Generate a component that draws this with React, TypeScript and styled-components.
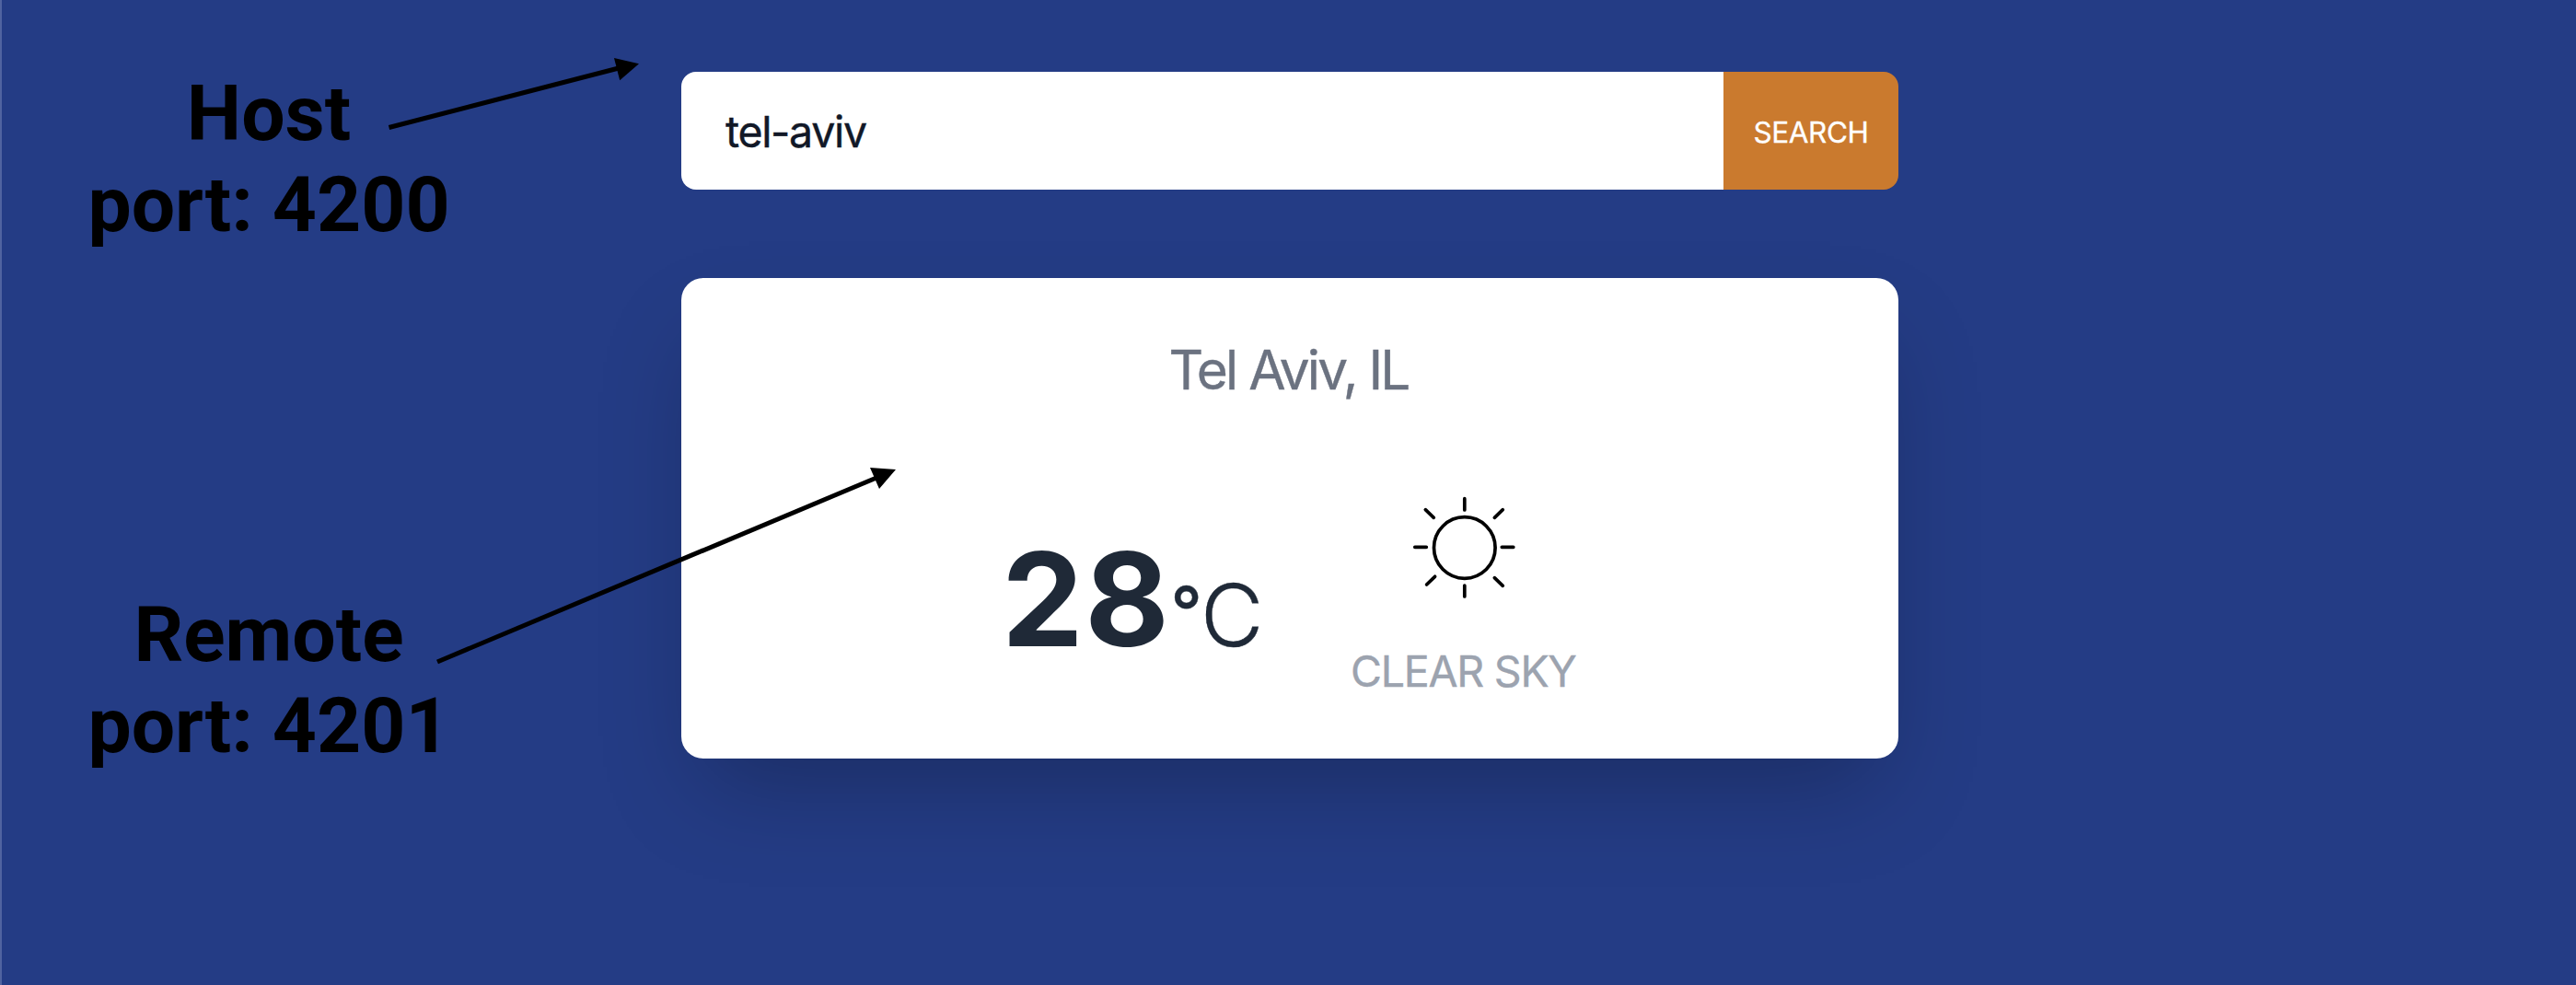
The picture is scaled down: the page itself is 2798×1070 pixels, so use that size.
import React from "react";
import styled, { createGlobalStyle } from "styled-components";

const GlobalStyle = createGlobalStyle`
  *, *::before, *::after { box-sizing: border-box; }
  body { margin: 0; background: #243c85; }
`;

const Page = styled.div`
  position: relative;
  display: grid;
  grid-template-columns: 738px 1322px 1fr;
  width: 100%;
  height: 1070px;
  overflow: hidden;
  background: #243c85;
  border-left: 2px solid #5063a0;
  font-family: Inter, "Liberation Sans", sans-serif;
`;

const Notes = styled.aside`
  display: flex;
  flex-direction: column;
  align-items: flex-start;
  gap: 368px;
  padding: 74px 0 0 93px;
`;

const Note = styled.p`
  margin: 0;
  width: 394px;
  color: #000;
  font-family: Roboto, sans-serif;
  font-size: 84px;
  font-weight: 700;
  line-height: 99px;
  text-align: center;
  white-space: nowrap;
`;

const Main = styled.main`
  display: flex;
  flex-direction: column;
  gap: 96px;
  padding-top: 78px;
`;

const SearchBar = styled.form`
  display: flex;
  height: 128px;
  border-radius: 16px;
  overflow: hidden;
`;

const SearchInput = styled.input`
  flex: 1;
  min-width: 0;
  padding: 2px 48px 0;
  border: 0;
  outline: 0;
  background: #fff;
  color: #111827;
  font: 400 46.5px Inter, "Liberation Sans", sans-serif;
  letter-spacing: -1.35px;
  -webkit-text-stroke: 0.4px currentColor;
`;

const SearchButton = styled.button`
  width: 190px;
  padding: 2px 0 0;
  border: 0;
  background: #ca7a2e;
  color: #fff;
  font: 400 31.5px Inter, "Liberation Sans", sans-serif;
  letter-spacing: -0.45px;
  text-transform: uppercase;
  -webkit-text-stroke: 0.3px currentColor;
`;

const Card = styled.section`
  display: flex;
  flex-direction: column;
  align-items: center;
  height: 522px;
  padding-top: 62px;
  border-radius: 24px;
  background: #fff;
  box-shadow: 0 50px 100px -24px rgba(0, 0, 0, 0.25);
`;

const City = styled.h1`
  margin: 0;
  padding-right: 3px;
  color: #6b7280;
  font-size: 58.5px;
  font-weight: 400;
  line-height: 76px;
  letter-spacing: -2.8px;
  -webkit-text-stroke: 0.4px currentColor;
`;

const Reading = styled.div`
  display: flex;
  width: 626px;
  gap: 96px;
  margin-top: 75px;
`;

const Temperature = styled.div`
  display: flex;
  align-items: baseline;
  width: 283px;
  padding-top: 64px;
  color: #1f2937;
  line-height: 144px;
  white-space: nowrap;
`;

const Degrees = styled.span`
  font-size: 141px;
  font-weight: 700;
  letter-spacing: 1.5px;
`;

const Unit = styled.span`
  font-size: 94px;
  font-weight: 300;
  -webkit-text-stroke: 0.4px currentColor;
`;

const DegreeSign = styled.span`
  display: inline-block;
  width: 32.5px;
  font-size: 75px;
  font-weight: 500;
  line-height: 1;
  vertical-align: 11px;
`;

const Conditions = styled.div`
  display: flex;
  flex-direction: column;
  align-items: flex-start;
`;

const SunIcon = styled.svg`
  display: block;
  width: 160px;
  height: 160px;
  margin: 0 0 18px 43px;
`;

const Summary = styled.span`
  color: #9ca3af;
  font-size: 46.5px;
  font-weight: 400;
  line-height: 72px;
  letter-spacing: -1.25px;
  text-transform: uppercase;
  white-space: nowrap;
  -webkit-text-stroke: 0.4px currentColor;
`;

/* Overlay that links each note to the part of the page it describes. */
const Arrows = styled.svg`
  position: absolute;
  left: -2px;
  top: 0;
  width: 1000px;
  height: 760px;
  pointer-events: none;
`;

export default function App() {
  return (
    <>
      <GlobalStyle />
      <Page>
        <Notes>
          <Note>
            Host
            <br />
            port: 4200
          </Note>
          <Note>
            Remote
            <br />
            port: 4201
          </Note>
        </Notes>
        <Main>
          <SearchBar>
            <SearchInput defaultValue="tel-aviv" />
            <SearchButton type="button">Search</SearchButton>
          </SearchBar>
          <Card>
            <City>Tel Aviv, IL</City>
            <Reading>
              <Temperature>
                <Degrees>28</Degrees>
                <Unit>
                  <DegreeSign>°</DegreeSign>C
                </Unit>
              </Temperature>
              <Conditions>
                <SunIcon
                  viewBox="-80.8 -80 160 160"
                  fill="none"
                  stroke="#000"
                  strokeWidth="3.7"
                  strokeLinecap="round"
                >
                  <circle r="33.3" />
                  <path d="M0 -53.3V-41M0 41V53M-54 -.7H-41.5M40.5 -.7H53M-42.5 -41.3L-33.5 -32.7M41.5 -41.3L32.5 -32.7M32.5 32.7L41.5 41.3M-32.2 31.3L-41.2 40" />
                </SunIcon>
                <Summary>Clear sky</Summary>
              </Conditions>
            </Reading>
          </Card>
        </Main>
        <Arrows viewBox="0 0 1000 760">
          <path d="M422.5 138.5L672 74" stroke="#000" strokeWidth="5" />
          <path d="M667 63L694 69.3L673.2 87.2Z" />
          <path d="M475 719L952 519" stroke="#000" strokeWidth="5" />
          <path d="M945 508L973 510L955 531Z" />
        </Arrows>
      </Page>
    </>
  );
}
